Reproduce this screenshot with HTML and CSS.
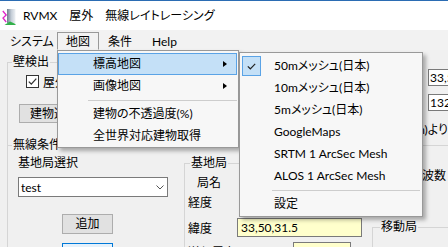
FILE: index.html
```html
<!DOCTYPE html>
<html lang="ja">
<head>
<meta charset="utf-8">
<title>RVMX</title>
<link rel="stylesheet" href="styles.css">
</head>
<body>
<div class="window">
  <div class="titlebar">
    <svg class="app-icon" width="14" height="17" viewBox="0 0 14 17">
      <defs>
        <linearGradient id="bld" x1="0" x2="1" y1="0" y2="0">
          <stop offset="0" stop-color="#6f7d8e"/>
          <stop offset="0.5" stop-color="#c3ccd6"/>
          <stop offset="1" stop-color="#eef1f4"/>
        </linearGradient>
      </defs>
      <rect x="5" y="1" width="8.5" height="14" fill="url(#bld)"/>
      <path d="M0.8 3 L4.2 7 L1 10 L4.2 14" fill="none" stroke="#e026c8" stroke-width="1.3"/>
      <path d="M2.5 17 L8 13.5 L13.5 16 L13.5 17 Z" fill="#32b04a"/>
    </svg>
    <span class="title">RVMX　屋外　無線レイトレーシング</span>
  </div>

  <div class="menubar">
    <span class="mb-item mb-1">システム</span>
    <span class="mb-item mb-2 open">地図</span>
    <span class="mb-item mb-3">条件</span>
    <span class="mb-item mb-4">Help</span>
  </div>

  <div class="client">
    <div class="top-row">
      <div class="group g-wall">
        <div class="group-title">壁検出</div>
        <div class="check-row">
          <span class="checkbox">
            <svg width="11" height="11" viewBox="0 0 11 11"><path d="M1.8 5.6 L4.3 8.1 L9.3 2.6" fill="none" stroke="#333" stroke-width="1.3"/></svg>
          </span>
          <span>屋外</span>
        </div>
        <div class="btn btn-build">建物選択</div>
      </div>
      <div class="g-topright">
        <div class="field f-top">33,50,31.5</div>
        <div class="field f-top">132,32,10.2</div>
        <div class="note">(30m)より</div>
      </div>
    </div>

    <div class="group g-radio">
      <div class="group-title">無線条件</div>
      <div class="radio-body">
        <div class="col-left">
          <div class="lbl">基地局選択</div>
          <div class="combo">
            <span>test</span>
            <svg width="8" height="5" viewBox="0 0 8 5"><path d="M0.5 0.5 L4 4 L7.5 0.5" fill="none" stroke="#555" stroke-width="1"/></svg>
          </div>
          <div class="btn btn-add">追加</div>
          <div class="btn btn-focus">削除</div>
        </div>

        <div class="group g-base">
          <div class="group-title">基地局</div>
          <div class="r-name">局名</div>
          <div class="r-lon">経度</div>
          <div class="r-field r-lat"><span class="rl">緯度</span><span class="field yellow w125">33,50,31.5</span></div>
          <div class="r-field r-pow"><span class="rl">送信電力(dBm)</span><span class="field yellow w58">10</span></div>
        </div>

        <div class="col-right">
          <div class="freq">周波数</div>
          <div class="group g-mobile">
            <div class="group-title">移動局</div>
          </div>
        </div>
      </div>
    </div>
  </div>

  <div class="menu main-menu">
    <div class="mi hl"><span>標高地図</span><i class="arrow"></i></div>
    <div class="mi"><span>画像地図</span><i class="arrow"></i></div>
    <div class="sep"></div>
    <div class="mi"><span>建物の不透過度(%)</span></div>
    <div class="mi"><span>全世界対応建物取得</span></div>
  </div>

  <div class="menu sub-menu">
    <div class="mi"><span class="ico on"><svg width="9" height="7" viewBox="0 0 9 7"><path d="M0.8 3.4 L3.3 5.8 L8.2 0.8" fill="none" stroke="#222" stroke-width="1.2"/></svg></span><span>50mメッシュ(日本)</span></div>
    <div class="mi"><span class="ico"></span><span>10mメッシュ(日本)</span></div>
    <div class="mi"><span class="ico"></span><span>5mメッシュ(日本)</span></div>
    <div class="mi"><span class="ico"></span><span>GoogleMaps</span></div>
    <div class="mi"><span class="ico"></span><span>SRTM 1 ArcSec Mesh</span></div>
    <div class="mi"><span class="ico"></span><span>ALOS 1 ArcSec Mesh</span></div>
    <div class="sep"></div>
    <div class="mi"><span class="ico"></span><span>設定</span></div>
  </div>
</div>
</body>
</html>
```

FILE: styles.css
```css
* { box-sizing: border-box; }
html, body { margin: 0; padding: 0; }
body {
  width: 448px;
  height: 247px;
  overflow: hidden;
  background: #f0f0f0;
  font-family: "Lato", "Noto Sans CJK JP", sans-serif;
  font-size: 12px;
  color: #000;
  font-feature-settings: "palt";
}
.window { position: relative; width: 448px; height: 247px; overflow: hidden; }

/* title bar */
.titlebar {
  height: 30px;
  border-top: 1px solid #2b6cb3;
  background: #fff;
  display: flex;
  align-items: center;
  padding-left: 2px;
}
.app-icon { flex: none; margin-right: 7px; margin-top: 1px; }
.title { line-height: 16px; white-space: nowrap; }

/* menu bar */
.menubar { height: 20px; background: #f2f2f2; display: flex; padding-left: 1px; }
.mb-item {
  height: 18px;
  margin-top: 2px;
  border: 1px solid transparent;
  padding-left: 8px;
  padding-top: 1px;
  line-height: 15px;
  white-space: nowrap;
  flex: none;
}
.mb-1 { width: 56px; }
.mb-2 { width: 42px; }
.mb-3 { width: 44px; }
.mb-item.open { border-color: #999; border-bottom-color: transparent; }

/* client area */
.client { height: 197px; background: #f0f0f0; padding-left: 7px; }
.top-row { height: 95px; display: flex; }
.group { border-top: 1px solid #d5d5d5; border-left: 1px solid #d5d5d5; }
.group-title {
  width: max-content;
  margin-top: -8px;
  height: 14px;
  line-height: 14px;
  padding: 0 1px;
  background: #f0f0f0;
  white-space: nowrap;
}

.g-wall { width: 300px; margin-top: 12px; flex: none; }
.g-wall > .group-title { margin-left: 4px; }
.check-row { display: flex; align-items: center; margin-top: 6px; margin-left: 18px; height: 13px; white-space: nowrap; }
.checkbox {
  width: 13px; height: 13px; flex: none;
  border: 1px solid #333; background: #fff;
  margin-right: 4px;
  display: flex; align-items: center; justify-content: center;
}
.btn {
  height: 20px;
  border: 1px solid #adadad;
  background: #e1e1e1;
  line-height: 18px;
  white-space: nowrap;
}
.btn-build { margin-top: 16px; margin-left: 11px; width: 70px; height: 19px; line-height: 17px; padding-left: 10px; }

.g-topright { margin-left: auto; width: 43px; margin-top: 19px; flex: none; }
.field {
  height: 17px;
  border: 1px solid #7a7a7a;
  background: #fff;
  padding-left: 1px;
  line-height: 15px;
  white-space: nowrap;
  overflow: hidden;
}
.f-top { margin-left: 23px; width: 60px; }
.f-top + .f-top { margin-top: 8px; }
.note { margin-top: 12px; height: 14px; line-height: 14px; display: flex; justify-content: flex-end; white-space: nowrap; }

.g-radio > .group-title { margin-left: 4px; }
.radio-body { display: flex; }
.col-left { width: 169px; flex: none; }
.lbl { margin-top: 4px; margin-left: 10px; height: 14px; line-height: 14px; }
.combo {
  margin-top: 7px; margin-left: 10px;
  width: 150px; height: 20px;
  border: 1px solid #7a7a7a; background: #fff;
  display: flex; align-items: center; justify-content: space-between;
  padding: 0 3px 0 2px;
}
.btn-add { margin-top: 17px; margin-left: 54px; width: 51px; text-align: center; }
.btn-focus {
  margin-top: 9px; margin-left: 54px; width: 51px; height: 23px;
  line-height: 21px; text-align: center;
  border-color: #0078d7; background: #e5f1fb;
}

.g-base { margin-left: 7px; margin-top: 11px; width: 186px; flex: none; }
.g-base > .group-title { margin-left: 5px; }
.r-name { margin-top: 6px; margin-left: 12px; height: 14px; line-height: 14px; }
.r-lon { margin-top: 6px; margin-left: 3px; height: 14px; line-height: 14px; }
.r-field { display: flex; align-items: center; margin-left: 3px; height: 19px; }
.r-lat { margin-top: 8px; }
.r-pow { margin-top: 5px; }
.rl { width: 49px; flex: none; white-space: nowrap; }
.r-pow .rl { width: 105px; }
.yellow { background: #ffffcc; height: 19px; line-height: 17px; padding-left: 3px; flex: none; }
.w125 { width: 125px; }
.w58 { width: 58px; }

.col-right { flex: 1; min-width: 0; }
.freq { margin-top: 17px; height: 14px; line-height: 14px; display: flex; justify-content: flex-end; padding-right: 2px; white-space: nowrap; }
.g-mobile { margin-left: 2px; margin-top: 44px; height: 40px; }
.g-mobile > .group-title { margin-left: 7px; }

/* drop-down menus */
.menu {
  position: absolute;
  background: #f7f7f7;
  border: 1px solid #999;
  box-shadow: 3px 3px 4px rgba(0, 0, 0, 0.3);
}
.main-menu { left: 57px; top: 50px; width: 182px; height: 98px; padding-top: 2px; }
.sub-menu { left: 239px; top: 52px; width: 184px; height: 165px; padding-top: 2px; }
.mi {
  height: 22px;
  border: 1px solid transparent;
  display: flex;
  align-items: center;
  line-height: 16px;
  white-space: nowrap;
}
.main-menu .mi { margin-right: 1px; padding-left: 34px; }
.mi.hl { background: #c4e0f7; border-color: #5aa3e6; }
.arrow {
  margin-left: auto;
  margin-right: 9px;
  width: 0; height: 0;
  border-left: 4px solid #000;
  border-top: 3px solid transparent;
  border-bottom: 3px solid transparent;
}
.sep { height: 1px; background: #cdcdcd; }
.main-menu .sep { margin: 3px 1px 2px 30px; }
.sub-menu .mi { padding-left: 1px; }
.ico { width: 19px; height: 20px; margin-right: 13px; flex: none; display: flex; align-items: center; justify-content: center; }
.ico.on { background: #c4e0f7; border: 1px solid #5aa3e6; }
.sub-menu .sep { margin: 3px 2px 2px 32px; }
```
